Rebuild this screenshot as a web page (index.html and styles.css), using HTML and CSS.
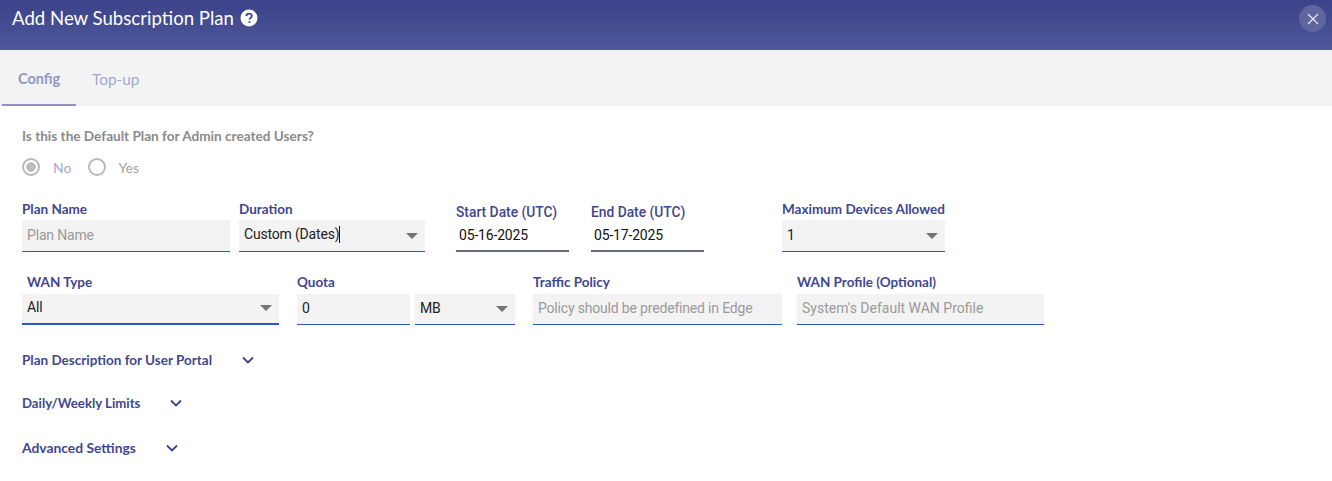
FILE: index.html
```html
<!DOCTYPE html>
<html lang="en">
<head>
    <meta charset="UTF-8">
    <title>Add New Subscription Plan</title>
    <link rel="stylesheet" href="styles.css">
</head>
<body>

<div class="header">
    <div class="title">
        <span>Add New Subscription Plan</span>
        <svg class="help" viewBox="0 0 18 18" width="18" height="18">
            <circle cx="9" cy="9" r="8.5" fill="#fff"/>
            <path d="M6.3 7.1C6.4 5.6 7.5 4.7 9.1 4.7c1.6 0 2.7.9 2.7 2.2 0 1.1-.6 1.6-1.3 2.1-.7.5-1 .8-1 1.6" fill="none" stroke="#3f468a" stroke-width="1.8"/>
            <circle cx="9.4" cy="13" r="1.1" fill="#3f468a"/>
        </svg>
    </div>
    <button class="close">
        <svg viewBox="0 0 12 12" width="12" height="12">
            <path d="M1 1l10 10M11 1L1 11" stroke="#e4e5f1" stroke-width="1.3" fill="none"/>
        </svg>
    </button>
</div>

<div class="tabs">
    <div class="tab active">Config</div>
    <div class="tab">Top-up</div>
</div>

<div class="content">
    <p class="question">Is this the Default Plan for Admin created Users?</p>
    <div class="radios">
        <span class="radio checked"></span><span class="radio-label no">No</span>
        <span class="radio"></span><span class="radio-label">Yes</span>
    </div>

    <div class="row row-one">
        <div class="field w-name">
            <label>Plan Name</label>
            <div class="box placeholder">Plan Name</div>
        </div>
        <div class="field w-duration">
            <label>Duration</label>
            <div class="box select"><span>Custom (Dates)<i class="caret-line"></i></span><b class="arrow"></b></div>
        </div>
        <div class="field w-date date-start">
            <label>Start Date (UTC)</label>
            <div class="box date">05-16-2025</div>
        </div>
        <div class="field w-date date-end">
            <label>End Date (UTC)</label>
            <div class="box date">05-17-2025</div>
        </div>
        <div class="field w-devices">
            <label>Maximum Devices Allowed</label>
            <div class="box select"><span>1</span><b class="arrow"></b></div>
        </div>
    </div>

    <div class="row row-two">
        <div class="field w-wan">
            <label class="indent">WAN Type</label>
            <div class="box select thick"><span>All</span><b class="arrow"></b></div>
        </div>
        <div class="field w-quota">
            <label>Quota</label>
            <div class="box value">0</div>
        </div>
        <div class="field w-unit">
            <label>&nbsp;</label>
            <div class="box select"><span>MB</span><b class="arrow"></b></div>
        </div>
        <div class="field w-policy">
            <label>Traffic Policy</label>
            <div class="box placeholder">Policy should be predefined in Edge</div>
        </div>
        <div class="field w-profile">
            <label>WAN Profile (Optional)</label>
            <div class="box placeholder">System's Default WAN Profile</div>
        </div>
    </div>

    <div class="section s-desc">Plan Description for User Portal
        <svg class="chev gap-desc" viewBox="0 0 12 8" width="12" height="8"><path d="M1 1.5l5 5 5-5" fill="none" stroke="#3a418c" stroke-width="1.8"/></svg>
    </div>
    <div class="section s-limits">Daily/Weekly Limits
        <svg class="chev gap-limits" viewBox="0 0 12 8" width="12" height="8"><path d="M1 1.5l5 5 5-5" fill="none" stroke="#3a418c" stroke-width="1.8"/></svg>
    </div>
    <div class="section s-adv">Advanced Settings
        <svg class="chev gap-adv" viewBox="0 0 12 8" width="12" height="8"><path d="M1 1.5l5 5 5-5" fill="none" stroke="#3a418c" stroke-width="1.8"/></svg>
    </div>
</div>

</body>
</html>
```

FILE: styles.css
```css
body {
    margin: 0;
    height: 481px;
    overflow: hidden;
    background-color: #fff;
    font-family: Lato, "Noto Sans", sans-serif;
}

.header {
    height: 50px;
    display: flex;
    justify-content: space-between;
    padding: 5px 6px 0 12px;
    box-sizing: border-box;
    background: linear-gradient(#3b4289, #50589a);
    color: #fff;
}

.title {
    display: flex;
    align-items: center;
    gap: 6px;
    height: 27px;
    margin-top: -1px;
    font-size: 18.6px;
}

.close {
    width: 27px;
    height: 27px;
    padding: 0;
    border: 0;
    border-radius: 50%;
    background-color: #5e659f;
    display: flex;
    justify-content: center;
    align-items: center;
}

.tabs {
    height: 56px;
    display: flex;
    padding-left: 2px;
    background-color: #f3f3f3;
}

.tab {
    padding: 20px 16px 0;
    font-size: 15.4px;
    color: #a3a7d0;
}

.tab.active {
    width: 42px;
    height: 34px;
    font-size: 14.5px;
    font-weight: 700;
    color: #9296c6;
    border-bottom: 2px solid #8f94c5;
}

.content {
    padding: 22px 22px 0;
}

.question {
    margin: 0;
    height: 17px;
    font-size: 13.6px;
    font-weight: 700;
    line-height: 17px;
    color: #8a8a8a;
}

.radios {
    display: flex;
    align-items: center;
    margin-top: 12px;
    height: 20px;
}

.radio {
    width: 14px;
    height: 14px;
    border: 2px solid #b9b9b9;
    border-radius: 50%;
    background-color: #fff;
}

.radio.checked {
    background: radial-gradient(circle, #bcbcbc 0 4.5px, #fff 5px);
}

.radio-label {
    margin-left: 12px;
    font-size: 14px;
    color: #a3a3a3;
}

.radio-label.no {
    margin-left: 13px;
    margin-right: 17px;
    color: #a3a7d0;
}

.row {
    display: flex;
    align-items: flex-end;
}

.row-one {
    margin-top: 24px;
}

.row-two {
    margin-top: 22px;
}

.field label {
    display: block;
    height: 17px;
    font-size: 13.5px;
    font-weight: 700;
    line-height: 17px;
    color: #3f478f;
    white-space: nowrap;
}

.field label.indent {
    padding-left: 5px;
}

.w-date label {
    margin-bottom: -3px;
    font-family: Roboto, "Liberation Sans", sans-serif;
    font-weight: 500;
    font-size: 13.8px;
}

.box {
    height: 29px;
    margin-top: 2px;
    display: flex;
    align-items: center;
    justify-content: space-between;
    padding: 0 5px 2px;
    background-color: #f3f3f3;
    border-bottom: 1px solid #2f56c6;
    font-size: 14px;
    letter-spacing: -0.18px;
    font-family: Roboto, "Liberation Sans", sans-serif;
    color: #222;
}

.row-two .box {
    height: 28px;
    margin-top: 3px;
}

.box.placeholder {
    color: #9a9a9a;
}

.w-profile .box.placeholder {
    letter-spacing: 0;
}

.box.date {
    padding: 0 3px;
    background: none;
    border-bottom: 2px solid #686a83;
    height: 30px;
    color: #111;
    justify-content: flex-start;
}

.row-two .box.thick {
    height: 26px;
    padding-bottom: 3px;
    border-bottom: 2px solid #2f56c6;
}

.arrow {
    width: 0;
    height: 0;
    margin-top: 2px;
    margin-right: 2px;
    border-left: 6px solid transparent;
    border-right: 6px solid transparent;
    border-top: 6px solid #757575;
}

.caret-line {
    display: inline-block;
    width: 1px;
    height: 17px;
    vertical-align: -4px;
    background-color: #111;
}

.w-name { width: 208px; margin-right: 9px; }
.w-duration { width: 186px; margin-right: 31px; }
.w-date { width: 113px; }
.date-start { margin-right: 22px; }
.date-end { margin-right: 78px; }
.w-devices { width: 163px; }
.w-wan { width: 257px; margin-right: 18px; }
.w-quota { width: 113px; margin-right: 5px; }
.w-unit { width: 100px; margin-right: 18px; }
.w-policy { width: 249px; margin-right: 15px; }
.w-profile { width: 247px; }

.section {
    display: flex;
    align-items: center;
    height: 17px;
    font-size: 13.5px;
    font-weight: 700;
    color: #3f478f;
}

.s-desc { margin-top: 26px; }
.s-limits { margin-top: 26px; font-size: 13.2px; }
.s-adv { margin-top: 28px; font-size: 13.85px; }

.gap-desc { margin-left: 30px; }
.gap-limits { margin-left: 30px; }
.gap-adv { margin-left: 30px; }
```
